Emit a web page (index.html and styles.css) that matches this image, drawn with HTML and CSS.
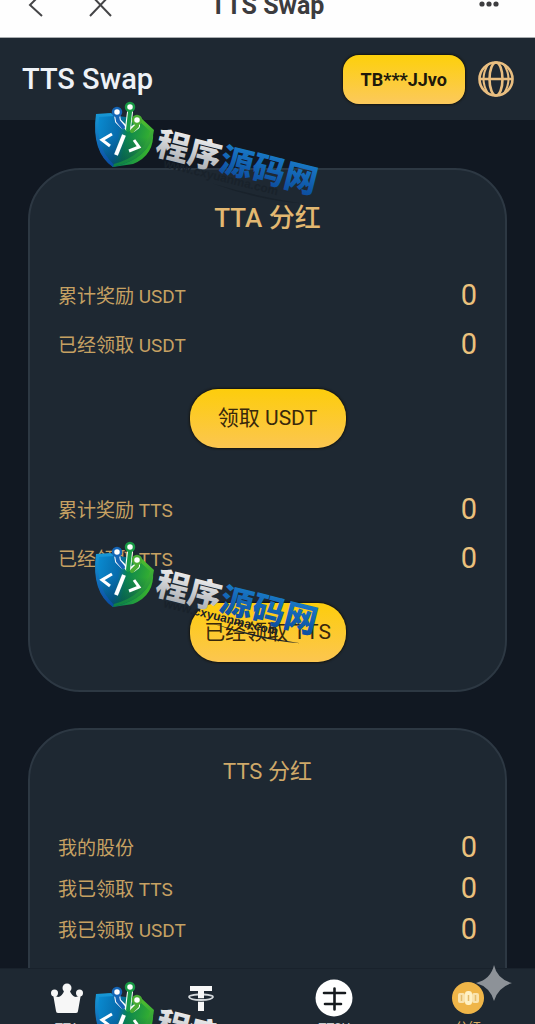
FILE: index.html
```html
<!DOCTYPE html>
<html lang="zh-CN">
<head>
<meta charset="utf-8">
<meta name="viewport" content="width=device-width, initial-scale=1">
<title>TTS Swap</title>
<link rel="stylesheet" href="styles.css">
</head>
<body>
<svg class="defs" aria-hidden="true">
  <defs>
    <linearGradient id="shield-blue" x1="0" y1="0" x2="0" y2="1"><stop offset="0" stop-color="#1799d6"/><stop offset="1" stop-color="#0b4aa2"/></linearGradient>
    <linearGradient id="shield-green" x1="0" y1="0" x2="0" y2="1"><stop offset="0" stop-color="#4fc02e"/><stop offset="1" stop-color="#0d7f45"/></linearGradient>
    <linearGradient id="shield-inner" x1="0" y1="0" x2="1" y2="0.2"><stop offset="0" stop-color="#0a8fd6"/><stop offset="0.45" stop-color="#076bab"/><stop offset="0.6" stop-color="#0b8550"/><stop offset="1" stop-color="#35b02f"/></linearGradient>
    <linearGradient id="shield-shade" x1="0" y1="0" x2="0" y2="1"><stop offset="0.4" stop-color="#032f5a" stop-opacity="0"/><stop offset="1" stop-color="#033a4c" stop-opacity="0.6"/></linearGradient>
    <linearGradient id="silver" x1="0" y1="0" x2="0" y2="1"><stop offset="0" stop-color="#ffffff"/><stop offset="1" stop-color="#9fa3a8"/></linearGradient>
    <linearGradient id="azure" x1="0" y1="0" x2="0" y2="1"><stop offset="0" stop-color="#1d86d2"/><stop offset="1" stop-color="#0a4597"/></linearGradient>
    <symbol id="brand" viewBox="0 0 250 120">
      <path d="M11 22 Q22 16 33 21 L56 24 L68 36 Q70 60 48 69 L28 72 Q8 58 11 22Z" fill="url(#shield-inner)"/>
      <path d="M11 22 L68 36 Q66 63 28 72 Q8 58 11 22Z" fill="url(#shield-shade)"/>
      <path d="M11 19 L26 18 L30 21 L14 22 Q10 52 29 70 L28 72 Q6 57 11 19Z" fill="url(#shield-blue)"/>
      <path d="M56 23 L69 35 Q66 63 28 72 L29 69 Q61 60 65 36 L54 26Z" fill="url(#shield-green)"/>
      <g fill="none" stroke-linecap="round" stroke-linejoin="round">
        <g stroke="#fff" stroke-width="6"><path d="M32 20 L33 26 L38 31"/><path d="M45 17 L43 33"/><path d="M52 28 L52 31 L48 34"/></g>
        <path d="M32 20 L33 26 L38 32" stroke="#1665b5" stroke-width="4"/>
        <path d="M45 17 L43 35" stroke="#189a45" stroke-width="4"/>
        <path d="M52 28 L52 31 L47 36" stroke="#4aad34" stroke-width="4"/>
        <path d="M27 39 L17 45 L25 51 M49 45 L54 52 L44 56" stroke="#fff" stroke-width="3" stroke-linecap="butt" stroke-linejoin="miter"/>
        <path d="M39 40 L31 60" stroke="#fff" stroke-width="4" stroke-linecap="butt"/>
      </g>
      <g fill="#fff" stroke-width="2.500">
        <circle cx="32" cy="17" r="4" stroke="#1665b5"/>
        <circle cx="45" cy="12" r="4" stroke="#189a45"/>
        <circle cx="52" cy="25" r="4" stroke="#4aad34"/>
      </g>
      <g transform="translate(78 72) rotate(14)">
        <path d="M52 4 Q100 9 142 2 Q100 6 52 4Z" fill="#19222b"/>
        <text class="brand-url">www.cxyuanma.com</text>
      </g>
      <g transform="translate(69 59) rotate(14)">
        <text class="brand-name"><tspan fill="url(#silver)">程序</tspan><tspan fill="url(#azure)">源码网</tspan></text>
      </g>
    </symbol>
  </defs>
</svg>

<div class="app">
  <div class="browser-bar">
    <div class="browser-nav">
      <button class="plain" aria-label="返回"><svg width="24" height="28" viewBox="0 0 24 28"><path d="M18 3 L6 15 L18 26" class="bar-stroke"/></svg></button>
      <button class="plain" aria-label="关闭"><svg width="24" height="28" viewBox="0 0 24 28"><path d="M2 4 L23 26 M23 4 L2 26" class="bar-stroke"/></svg></button>
    </div>
    <div class="browser-title">TTS Swap</div>
    <button class="plain browser-more" aria-label="更多"><svg width="20" height="28" viewBox="0 0 20 28"><g fill="#3d3d3f"><circle cx="3" cy="14" r="2.600"/><circle cx="10" cy="14" r="2.600"/><circle cx="17" cy="14" r="2.600"/></g></svg></button>
  </div>

  <header class="header">
    <h1>TTS Swap</h1>
    <div class="account">
      <button class="wallet">TB***JJvo</button>
      <button class="plain" aria-label="语言"><svg width="38" height="38" viewBox="0 0 38 38" fill="none" stroke="#e9be80" stroke-width="2.600"><circle cx="19" cy="19" r="16.500"/><ellipse cx="19" cy="19" rx="6.500" ry="16.500"/><path d="M11 4.500 Q2 19 11 33.500 M27 4.500 Q36 19 27 33.500" stroke-width="2"/><path d="M2.500 19 H35.500"/></svg></button>
    </div>
  </header>

  <main class="content">
    <section class="card">
      <h2>TTA 分红</h2>
      <dl class="stats">
        <div class="row"><dt>累计奖励 USDT</dt><dd>0</dd></div>
        <div class="row"><dt>已经领取 USDT</dt><dd>0</dd></div>
      </dl>
      <button class="claim">领取 USDT</button>
      <dl class="stats">
        <div class="row"><dt>累计奖励 TTS</dt><dd>0</dd></div>
        <div class="row"><dt>已经领取 TTS</dt><dd>0</dd></div>
      </dl>
      <button class="claim">已经领取 TTS</button>
    </section>
    <section class="card compact">
      <h2>TTS 分红</h2>
      <dl class="stats">
        <div class="row"><dt>我的股份</dt><dd>0</dd></div>
        <div class="row"><dt>我已领取 TTS</dt><dd>0</dd></div>
        <div class="row"><dt>我已领取 USDT</dt><dd>0</dd></div>
      </dl>
    </section>
  </main>

  <nav class="tabs">
    <a class="tab" href="#home">
      <svg width="40" height="40" viewBox="0 0 40 40" fill="#f7f7f7"><path d="M6 16 Q13 24 18 11 H22 Q27 24 34 16 L31 33 Q31 35 29 35 H11 Q9 35 9 33Z"/><circle cx="20" cy="10" r="4.500"/><circle cx="7.500" cy="15" r="3.500"/><circle cx="32.500" cy="15" r="3.500"/></svg>
      <span>TTA</span>
    </a>
    <a class="tab" href="#usdt">
      <svg width="40" height="40" viewBox="0 0 40 40" fill="#f7f7f7"><path d="M9 8 H31 V13 H23 V33 H17 V13 H9Z"/><path d="M17 16.500 Q8 17 8 19 Q9 22 20 22 Q31 22 32 19 Q32 17 23 16.500" fill="none" stroke="#1e2832" stroke-width="3.500"/><path d="M17 16.500 Q8 17 8 19 Q9 22 20 22 Q31 22 32 19 Q32 17 23 16.500" fill="none" stroke="#d5d9dc" stroke-width="1.800"/><path d="M17 13 H23 V20 H17Z"/></svg>
      <span>USDT</span>
    </a>
    <a class="tab" href="#swap">
      <svg width="40" height="40" viewBox="0 0 40 40"><circle cx="20" cy="20" r="18.500" fill="#fff"/><path d="M10 15 H31 M11 26 H27 M20.500 10.500 V31.500" fill="none" stroke="#161a1e" stroke-width="2.600" stroke-linecap="round"/></svg>
      <span>TTSU</span>
    </a>
    <a class="tab active" href="#dividend">
      <svg width="40" height="40" viewBox="0 0 40 40"><circle cx="20" cy="20" r="16" fill="#efb548"/><g fill="#f9e3ae"><rect x="10" y="15" width="7" height="10" rx="2"/><rect x="24" y="15" width="7" height="10" rx="2"/><rect x="17" y="13" width="7" height="14" rx="3" fill="#fff1c4"/></g><path d="M13.500 17 V23 M27.500 17 V23 M20.500 17 V23" stroke="#e5bd6c" stroke-width="1.500"/></svg>
      <span>分红</span>
    </a>
  </nav>

  <svg class="brand brand-top" aria-hidden="true"><use href="#brand"/></svg>
  <svg class="brand brand-middle" aria-hidden="true"><use href="#brand"/></svg>
  <svg class="brand brand-bottom" aria-hidden="true"><use href="#brand"/></svg>
  <svg class="sparkle" viewBox="0 0 36 36" aria-hidden="true"><path d="M18 0 Q21 14 36 18 Q22 22 18 36 Q14 22 0 18 Q15 14 18 0Z" fill="#8d9298"/></svg>
</div>
</body>
</html>
```
FILE: styles.css
```css
* { box-sizing: border-box; }

body {
  margin: 0;
  background: #111822;
  font-family: Roboto, "Noto Sans CJK SC", sans-serif;
}

h1, h2, dl, dd { margin: 0; }
button { font-family: inherit; }
svg { display: block; flex: none; }

.defs { position: absolute; width: 0; height: 0; }

.plain {
  padding: 0;
  border: 0;
  background: none;
}

.app {
  position: relative;
  display: flex;
  flex-direction: column;
  height: 100vh;
  overflow: hidden;
}

.browser-bar {
  display: grid;
  grid-template-columns: 1fr auto 1fr;
  align-items: end;
  flex: none;
  height: 38px;
  padding: 0 36px 19px 24px;
  background: #fefefe;
  border-bottom: 1px solid #a9adb0;
}

.browser-nav,
.browser-title,
.browser-more {
  display: flex;
  align-items: flex-end;
  height: 18px;
}

.browser-nav { gap: 40px; }
.browser-more { justify-self: end; }

.browser-title {
  padding-left: 12px;
  color: #3c3c3e;
  font-size: 25px;
  font-weight: 700;
  line-height: 24px;
}

.bar-stroke {
  fill: none;
  stroke: #454547;
  stroke-width: 2;
}

.header {
  display: flex;
  align-items: center;
  justify-content: space-between;
  flex: none;
  height: 82px;
  padding: 0 20px 0 22px;
  background: #1e2832;
}

h1 {
  color: #eef2f7;
  font-size: 29px;
  font-weight: 500;
}

.account {
  display: flex;
  align-items: center;
  gap: 12px;
}

.wallet {
  padding: 0 18px;
  border: 0;
  border-radius: 16px;
  background: linear-gradient(#fdd00b, #fcc95c);
  box-shadow: 0 0 2px 1px #17160f;
  color: #20180a;
  font-size: 18px;
  font-weight: 700;
  line-height: 49px;
}

.content {
  display: flex;
  flex: 1;
  flex-direction: column;
  gap: 36px;
  min-height: 0;
  padding: 48px 28px 0;
  overflow: hidden;
}

.card {
  flex: none;
  padding: 28px;
  border: 2px solid #2d3843;
  border-radius: 52px;
  background: #1e2832;
}

h2 {
  color: #e3b871;
  font-size: 26px;
  font-weight: 500;
  line-height: 40px;
  text-align: center;
}

.stats { margin-top: 32px; }
.claim + .stats { margin-top: 36px; }

.row {
  display: flex;
  align-items: center;
  justify-content: space-between;
  height: 49px;
}

dt {
  color: #c6a162;
  font-size: 19px;
}

dd {
  color: #ebc17d;
  font-size: 29px;
}

.claim {
  display: block;
  width: 156px;
  height: 59px;
  margin: 21px auto 0;
  padding: 0 0 6px;
  border: 0;
  border-radius: 28px;
  background: linear-gradient(#fdcd0c, #fcc650);
  box-shadow: 0 0 2px 1px #17160f;
  color: #38280c;
  font-size: 21px;
}

.compact { padding: 26px 28px 80px; }

.compact h2 {
  color: #cfa969;
  font-size: 22px;
  font-weight: 400;
  line-height: 32px;
}

.compact .stats { margin-top: 38px; }
.compact .row { height: 41px; }

.tabs {
  display: grid;
  grid-template-columns: repeat(4, 1fr);
  flex: none;
  height: 56px;
  padding-top: 9px;
  overflow: hidden;
  background: #1e2832;
  border-top: 1px solid #19222c;
}

.tab {
  display: flex;
  flex-direction: column;
  align-items: center;
  color: #c4c8cc;
  font-size: 13px;
  line-height: 20px;
  text-decoration: none;
}

.tab.active { color: #d9ab60; }

.brand {
  position: absolute;
  left: 85px;
  width: 250px;
  height: 120px;
  pointer-events: none;
}

.brand-top { top: 95px; }
.brand-middle { top: 535px; }
.brand-bottom { top: 975px; }

.brand-name {
  font-family: "Noto Sans CJK SC", sans-serif;
  font-size: 33px;
  font-weight: 900;
}

.brand-url {
  fill: #19222b;
  font-family: "Liberation Sans", sans-serif;
  font-size: 12px;
  font-weight: 700;
}

.sparkle {
  position: absolute;
  right: 23px;
  bottom: 23px;
  width: 36px;
  height: 36px;
}
```
